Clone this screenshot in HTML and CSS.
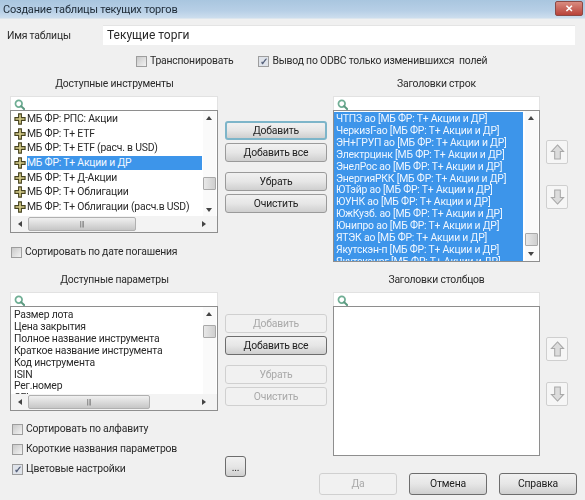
FILE: index.html
```html
<!DOCTYPE html>
<html lang="ru">
<head>
<meta charset="utf-8">
<title>Создание таблицы текущих торгов</title>
<link rel="stylesheet" href="styles.css">
</head>
<body>
<svg class="defs" width="0" height="0" aria-hidden="true">
  <symbol id="search" viewBox="0 0 12 12"><circle cx="5.2" cy="5.2" r="3.6" fill="none" stroke="#6fae94" stroke-width="1.9"/><path d="M7.8 7.8 11 11" stroke="#5c9a80" stroke-width="2.2" stroke-linecap="round"/></symbol>
  <symbol id="plus" viewBox="0 0 13 13"><path d="M5 1h3v4h4v3H8v4H5V8H1V5h4z" fill="#d8cf8c" stroke="#45421f" stroke-width="1.2"/></symbol>
  <symbol id="up" viewBox="0 0 16 18"><path d="M8 1.5 14.5 8.5H11V16.5H5V8.5H1.5Z" fill="#dcdcdc" stroke="#a8a8a8" stroke-width="1.1"/></symbol>
  <symbol id="down" viewBox="0 0 16 18"><path d="M8 16.5 14.5 9.5H11V1.5H5V9.5H1.5Z" fill="#dcdcdc" stroke="#a8a8a8" stroke-width="1.1"/></symbol>
</svg>
<div class="window">
  <header class="titlebar">
    <span>Создание таблицы текущих торгов</span>
    <span class="close">✕</span>
  </header>

  <div class="name-row">
    <label class="name-label">Имя таблицы</label>
    <div class="name-input">Текущие торги</div>
  </div>

  <div class="options">
    <label class="check"><span class="box"></span>Транспонировать</label>
    <label class="check"><span class="box on">✓</span>Вывод по ODBC только изменившихся&nbsp; полей</label>
  </div>

  <section class="block block-top">
    <h2 class="heading">Доступные инструменты</h2>
    <span></span>
    <h2 class="heading">Заголовки строк</h2>
    <span></span>

    <div class="col">
      <div class="panel">
        <div class="search"><svg class="search-icon"><use href="#search"/></svg></div>
        <div class="list list-tools">
          <div class="rows tall">
            <div class="row"><svg class="plus"><use href="#plus"/></svg><span>МБ ФР: РПС: Акции</span></div>
            <div class="row"><svg class="plus"><use href="#plus"/></svg><span>МБ ФР: Т+ ETF</span></div>
            <div class="row"><svg class="plus"><use href="#plus"/></svg><span>МБ ФР: Т+ ETF (расч. в USD)</span></div>
            <div class="row"><svg class="plus"><use href="#plus"/></svg><span class="picked">МБ ФР: Т+ Акции и ДР</span></div>
            <div class="row"><svg class="plus"><use href="#plus"/></svg><span>МБ ФР: Т+ Д-Акции</span></div>
            <div class="row"><svg class="plus"><use href="#plus"/></svg><span>МБ ФР: Т+ Облигации</span></div>
            <div class="row"><svg class="plus"><use href="#plus"/></svg><span>МБ ФР: Т+ Облигации (расч.в USD)</span></div>
          </div>
          <div class="vbar"><i class="tri t-up"></i><b class="thumb thumb-tools"></b><i class="tri t-down"></i></div>
          <div class="hbar"><i class="tri t-left"></i><b class="hthumb hthumb-tools">|||</b><i class="tri t-right"></i></div>
        </div>
      </div>
      <label class="check check-sort"><span class="box"></span>Сортировать по дате погашения</label>
    </div>

    <div class="buttons buttons-top">
      <button class="btn btn-focus">Добавить</button>
      <button class="btn">Добавить все</button>
      <button class="btn spaced">Убрать</button>
      <button class="btn">Очистить</button>
    </div>

    <div class="panel">
      <div class="search"><svg class="search-icon"><use href="#search"/></svg></div>
      <div class="list list-rows">
        <div class="rows sel">
          <div>ЧТПЗ ао [МБ ФР: Т+ Акции и ДР]</div>
          <div>ЧеркизГ-ао [МБ ФР: Т+ Акции и ДР]</div>
          <div>ЭН+ГРУП ао [МБ ФР: Т+ Акции и ДР]</div>
          <div>Электрцинк [МБ ФР: Т+ Акции и ДР]</div>
          <div>ЭнелРос ао [МБ ФР: Т+ Акции и ДР]</div>
          <div>ЭнергияРКК [МБ ФР: Т+ Акции и ДР]</div>
          <div>ЮТэйр ао [МБ ФР: Т+ Акции и ДР]</div>
          <div>ЮУНК ао [МБ ФР: Т+ Акции и ДР]</div>
          <div>ЮжКузб. ао [МБ ФР: Т+ Акции и ДР]</div>
          <div>Юнипро ао [МБ ФР: Т+ Акции и ДР]</div>
          <div>ЯТЭК ао [МБ ФР: Т+ Акции и ДР]</div>
          <div>Якутскэн-п [МБ ФР: Т+ Акции и ДР]</div>
          <div>Якутскэнрг [МБ ФР: Т+ Акции и ДР]</div>
        </div>
        <div class="vbar"><i class="tri t-up"></i><b class="thumb thumb-rows"></b><i class="tri t-down"></i></div>
      </div>
    </div>

    <div class="arrows arrows-top">
      <button class="arrow"><svg class="arrow-icon"><use href="#up"/></svg></button>
      <button class="arrow"><svg class="arrow-icon"><use href="#down"/></svg></button>
    </div>
  </section>

  <section class="block block-params">
    <h2 class="heading">Доступные параметры</h2>
    <span></span>
    <h2 class="heading">Заголовки столбцов</h2>
    <span></span>

    <div class="col">
      <div class="panel">
        <div class="search"><svg class="search-icon"><use href="#search"/></svg></div>
        <div class="list list-params">
          <div class="rows plain">
            <div>Размер лота</div>
            <div>Цена закрытия</div>
            <div>Полное название инструмента</div>
            <div>Краткое название инструмента</div>
            <div>Код инструмента</div>
            <div>ISIN</div>
            <div>Рег.номер</div>
            <div>CFI</div>
          </div>
          <div class="vbar"><i class="tri t-up"></i><b class="thumb thumb-params"></b><i class="tri t-down"></i></div>
          <div class="hbar"><i class="tri t-left"></i><b class="hthumb hthumb-params">|||</b><i class="tri t-right"></i></div>
        </div>
      </div>
      <div class="checks">
        <label class="check"><span class="box"></span>Сортировать по алфавиту</label>
        <label class="check"><span class="box"></span>Короткие названия параметров</label>
        <label class="check"><span class="box on">✓</span>Цветовые настройки</label>
      </div>
    </div>

    <div class="buttons buttons-params">
      <button class="btn off">Добавить</button>
      <button class="btn dark">Добавить все</button>
      <button class="btn off spaced">Убрать</button>
      <button class="btn off">Очистить</button>
      <button class="btn dark more">...</button>
    </div>

    <div class="panel">
      <div class="search"><svg class="search-icon"><use href="#search"/></svg></div>
      <div class="list list-cols"></div>
    </div>

    <div class="arrows arrows-params">
      <button class="arrow"><svg class="arrow-icon"><use href="#up"/></svg></button>
      <button class="arrow"><svg class="arrow-icon"><use href="#down"/></svg></button>
    </div>
  </section>

  <footer class="footer">
    <button class="btn off wide">Да</button>
    <button class="btn dark wide">Отмена</button>
    <button class="btn dark wide">Справка</button>
  </footer>
</div>
</body>
</html>
```

FILE: styles.css
```css
* { box-sizing: border-box; }
html, body { margin: 0; padding: 0; }
body {
  width: 585px;
  height: 500px;
  overflow: hidden;
  background: #f0f0f0;
  font-family: Roboto, "Liberation Sans", Arial, sans-serif;
  font-size: 10.4px;
  letter-spacing: -0.2px;
  color: #2a2a2a;
}
.defs { display: block; height: 0; }
.window {
  width: 585px;
  height: 500px;
  display: flex;
  flex-direction: column;
  filter: blur(0.35px);
}

/* title bar */
.titlebar {
  height: 19px;
  padding: 0 2px 0 3px;
  display: flex;
  justify-content: space-between;
  align-items: flex-start;
  background: linear-gradient(#a9c6df, #b7cfe6 60%, #cddeee);
  font-size: 11px;
  line-height: 19px;
  color: #1d2a36;
  border-bottom: 1px solid #dde6ee;
}
.close {
  width: 28px;
  height: 15px;
  margin-top: 1px;
  background: linear-gradient(#d98b80, #b8433a);
  border: 1px solid #8a4a46;
  border-radius: 2px;
  color: #fff;
  font-size: 10px;
  font-weight: bold;
  line-height: 13px;
  text-align: center;
}

/* name */
.name-row {
  margin-top: 6px;
  padding: 0 10px 0 7px;
  display: flex;
  align-items: center;
}
.name-label { width: 96px; }
.name-input {
  flex: 1;
  height: 20px;
  padding-left: 4px;
  background: #fff;
  border-top: 1px solid #e4e4e4;
  line-height: 19px;
  font-size: 12px;
  letter-spacing: 0;
}

/* checks */
.options {
  margin-top: 9px;
  padding-left: 136px;
  display: flex;
  gap: 25px;
}
.check {
  height: 14px;
  display: flex;
  align-items: center;
  gap: 3px;
  line-height: 14px;
  white-space: nowrap;
}
.box {
  flex: none;
  width: 11px;
  height: 11px;
  background: linear-gradient(135deg, #c9c9c9, #f2f2f2);
  border: 1px solid #9d9d9d;
  color: #55607a;
  font-size: 10px;
  font-weight: bold;
  line-height: 9px;
  text-align: center;
}
.box.on { background: #dfe3ea; }

/* sections */
.block {
  padding-left: 10px;
  display: grid;
  grid-template-columns: 209px 102px 207px 22px;
  grid-template-rows: 14px auto;
  column-gap: 6px;
  row-gap: 5px;
  align-items: start;
}
.block-top { margin-top: 9px; }
.block-params { margin-top: 11px; }
.heading {
  margin: 0;
  font-size: inherit;
  font-weight: normal;
  line-height: 14px;
  text-align: center;
  white-space: nowrap;
}
.col { width: 208px; }
.panel { width: 100%; }
.search {
  height: 14px;
  padding: 2px 0 0 3px;
  background: #fff;
  border: 1px solid #e2e2e2;
  border-bottom: 0;
  display: flex;
}
.search-icon { width: 11px; height: 11px; }

/* lists */
.list {
  position: relative;
  overflow: hidden;
  background: #fff;
  border: 1px solid #8e8e8e;
}
.list-tools { height: 123px; }
.list-rows { height: 152px; }
.list-params { height: 105px; }
.list-cols { height: 150px; }
.rows {
  width: 191px;
  overflow: hidden;
  white-space: nowrap;
  background: #fff;
}
.rows.tall { height: 106px; padding: 1px 0 0 3px; }
.row {
  height: 14.6px;
  display: flex;
  align-items: center;
  line-height: 14px;
}
.plus { flex: none; width: 12px; height: 12px; margin-right: 1px; }
.picked {
  flex: 1;
  background: #3d95ea;
  color: #f3f8ff;
  height: 14.6px;
}
.rows.plain { height: 88px; padding: 2px 0 0 3px; line-height: 11.9px; }
.rows.sel {
  width: 189px;
  height: 150px;
  margin: 1px 0 0 0;
  padding: 1px 0 0 2px;
  background: #3d95ea;
  color: #eef6ff;
  line-height: 11.9px;
}

/* scrollbars */
.vbar {
  position: absolute;
  top: 0;
  right: 1px;
  width: 13px;
  height: 100%;
  background: #fafafa;
}
.list-tools .vbar, .list-params .vbar { height: 106px; }
.thumb {
  position: absolute;
  left: 0;
  width: 13px;
  height: 13px;
  background: linear-gradient(90deg, #e8e8e8, #cfcfcf);
  border: 1px solid #a9a9a9;
  border-radius: 1px;
}
.thumb-tools { top: 66px; }
.thumb-rows { top: 122px; }
.thumb-params { top: 18px; }
.tri { position: absolute; width: 0; height: 0; border: 3px solid transparent; }
.t-up { top: 5px; left: 3px; border-bottom: 4px solid #444; border-top: 0; }
.t-down { bottom: 5px; left: 3px; border-top: 4px solid #444; border-bottom: 0; }
.t-left { left: 7px; top: 5px; border-right: 4px solid #444; border-left: 0; }
.t-right { right: 11px; top: 5px; border-left: 4px solid #444; border-right: 0; }
.hbar {
  position: absolute;
  left: 0;
  right: 0;
  bottom: 0;
  height: 16px;
  background: #f3f3f3;
}
.hthumb {
  position: absolute;
  left: 17px;
  top: 1px;
  height: 14px;
  background: linear-gradient(#f0f0f0, #c6c6c6);
  border: 1px solid #b0b0b0;
  border-radius: 2px;
  color: #555;
  font-size: 7px;
  font-weight: normal;
  line-height: 12px;
  text-align: center;
}
.hthumb-tools { width: 108px; }
.hthumb-params { width: 122px; }

/* buttons */
.buttons { display: flex; flex-direction: column; gap: 3px; }
.buttons-top { padding-top: 25px; }
.buttons-params { padding-top: 22px; }
.btn {
  width: 102px;
  height: 19px;
  padding: 0;
  font: inherit;
  letter-spacing: inherit;
  color: #222;
  background: linear-gradient(#f1f1f1 0, #e6e6e6 50%, #cfcfcf 100%);
  border: 1px solid #9a9a9a;
  border-radius: 3px;
  line-height: 16px;
}
.btn-focus { border: 2px solid #7db5c9; line-height: 14px; }
.btn.spaced { margin-top: 7px; }
.btn.off {
  background: #f1f1f1;
  border-color: #d0d0d0;
  color: #a9a9a9;
}
.btn.dark { border-color: #6d6d6d; }
.btn.more {
  width: 21px;
  height: 21px;
  margin-top: 47px;
  line-height: 22px;
}
.btn.wide { width: 78px; height: 22px; }

/* arrows */
.arrows { display: flex; flex-direction: column; gap: 21px; }
.arrows-top { padding-top: 44px; }
.arrows-params { padding-top: 45px; }
.arrow {
  width: 22px;
  height: 24px;
  padding: 0;
  display: flex;
  align-items: center;
  justify-content: center;
  background: #f6f6f6;
  border: 1px solid #cfcfcf;
  border-radius: 2px;
}
.arrow-icon { width: 15px; height: 18px; }

.check-sort { margin: 12px 0 0 1px; }
.checks {
  margin: 11px 0 0 2px;
  display: flex;
  flex-direction: column;
  gap: 6px;
}

/* footer */
.footer {
  margin-top: -4px;
  padding-right: 8px;
  display: flex;
  justify-content: flex-end;
  gap: 12px;
}
```
